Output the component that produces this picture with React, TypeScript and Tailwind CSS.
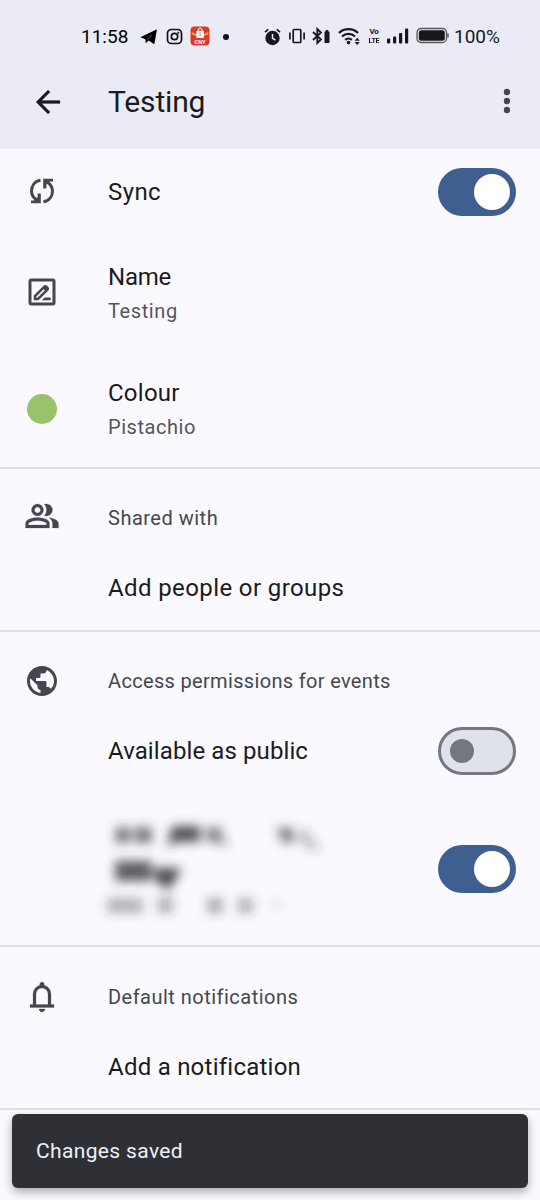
import type { ReactNode } from "react";

const PATHS = {
  back: "m313-440 224 224-57 56-320-320 320-320 57 56-224 224h487v80H313Z",
  group:
    "M40-160v-112q0-34 17.5-62.5T104-378q62-31 126-46.5T360-440q66 0 130 15.5T616-378q29 15 46.5 43.5T680-272v112H40Zm720 0v-120q0-44-24.5-84.5T666-434q51 6 96 20.5t84 35.5q36 20 55 44.5t19 53.5v120H760ZM360-480q-66 0-113-47t-47-113q0-66 47-113t113-47q66 0 113 47t47 113q0 66-47 113t-113 47Zm400-160q0 66-47 113t-113 47q-11 0-28-2.5t-28-5.5q27-32 41.5-71t14.5-81q0-42-14.5-81T544-792q14-5 28-6.5t28-1.5q66 0 113 47t47 113ZM120-240h480v-32q0-11-5.5-20T580-306q-54-27-109-40.5T360-360q-56 0-111 13.5T140-306q-9 5-14.5 14t-5.500 20v32Zm240-320q33 0 56.5-23.5T440-640q0-33-23.5-56.5T360-720q-33 0-56.5 23.5T280-640q0 33 23.5 56.5T360-560Z",
  bell: "M160-200v-80h80v-280q0-83 50-147.5T420-792v-28q0-25 17.5-42.5T480-880q25 0 42.5 17.5T540-820v28q80 20 130 84.5T720-560v280h80v80H160Zm320-300Zm0 420q-33 0-56.5-23.5T400-160h160q0 33-23.5 56.5T480-80ZM320-280h320v-280q0-66-47-113t-113-47q-66 0-113 47t-47 113v280Z",
};

function Icon({ name, className = "" }: { name: keyof typeof PATHS; className?: string }) {
  return (
    <svg viewBox="0 -960 960 960" className={`size-9 shrink-0 fill-current ${className}`}>
      <path d={PATHS[name]} stroke="currentColor" strokeWidth="6" />
    </svg>
  );
}

function SyncIcon() {
  return (
    <svg viewBox="0 0 36 36" className="mb-px size-9" fill="none" stroke="currentColor" strokeWidth="3">
      <path d="M16.500 7.200C10.500 8.200 7.500 13 7.500 18c0 3.800 1.800 6.600 5 8.800" />
      <path d="M7 30.200h9.800v-9.800h-3.200v3.800l-3.600 3.200H7z" fill="currentColor" stroke="none" />
      <path d="M19.500 28.800c6-1 9-5.800 9-10.800 0-3.800-1.800-6.600-5-8.800" />
      <path d="M29 5.800h-9.800v9.800h3.200v-3.800l3.600-3.200h3z" fill="currentColor" stroke="none" />
    </svg>
  );
}

function GlobeIcon() {
  return (
    <svg viewBox="0 0 24 24" className="size-9 fill-current">
      <path d="M12 2C6.48 2 2 6.48 2 12s4.480 10 10 10 10-4.480 10-10S17.520 2 12 2zm-1 17.930c-3.950-.490-7-3.850-7-7.930 0-.620.080-1.210.210-1.790L9 15v1c0 1.100.9 2 2 2v1.930zm6.900-2.540c-.260-.810-1-1.390-1.900-1.390h-1v-3c0-.550-.450-1-1-1H8v-2h2c.550 0 1-.450 1-1V7h2c1.100 0 2-.9 2-2v-.410c2.930 1.190 5 4.060 5 7.410 0 2.080-.8 3.970-2.100 5.390z" />
    </svg>
  );
}

function RenameIcon() {
  return (
    <svg viewBox="0 0 36 36" className="mb-[4px] size-9" fill="none" stroke="currentColor">
      <rect x="6" y="6" width="24" height="24" rx="1.500" strokeWidth="3" />
      <path d="M11 25v-3l9.200-9.200a1.500 1.500 0 0 1 2.100 0l.9.9a1.500 1.500 0 0 1 0 2.100L14 25z" strokeWidth="2.500" />
      <path d="m18.200 13.700 4.200 4.200 2-2v-2.200L22 11.700z" fill="currentColor" stroke="none" />
      <path d="M17.800 26.300l2.900-2.900h6v2.900z" fill="currentColor" stroke="none" />
    </svg>
  );
}

function StatusBar() {
  return (
    <div className="flex h-[73px] items-center pl-[81px] text-[#17181c]">
      <span className="w-[59px] whitespace-nowrap pt-px text-[19px] text-black">11:58</span>
      <svg width="18" height="18" viewBox="0 0 18 18" className="text-black">
        <path d="M0.300 9.200 17 1.300 14.300 16.300 8.600 12.400 5.800 15.200 5.300 11.300z" fill="currentColor" />
        <path d="M6.800 11.800 12 7" fill="none" stroke="#ebebf5" strokeWidth=".4" />
      </svg>
      <svg width="17" height="17" viewBox="0 0 17 17" className="ml-2" fill="none" stroke="#111">
        <rect x="1.500" y="1.500" width="14" height="14" rx="3.800" strokeWidth="1.700" />
        <circle cx="8.500" cy="8.500" r="3.200" strokeWidth="1.700" />
        <circle cx="12.400" cy="4.700" r="1" fill="#111" stroke="none" />
      </svg>
      <svg width="20" height="20" viewBox="0 0 20 20" className="ml-[7px] mb-px">
        <rect x=".5" y=".5" width="19" height="19" rx="4" fill="#dc3a2d" />
        <path d="M1.500 6 6 8v2L2 8.500zM18.500 6 14 8v2l4-1.500z" fill="#f4a340" />
        <rect x="6.300" y="4.700" width="7.600" height="7.300" rx=".8" fill="#fff" />
        <path d="M8.200 5V4a1.900 1.900 0 0 1 3.800 0v1" fill="none" stroke="#fff" />
        <path d="M11.200 7q-2.300-.8-2 .5l1.800 1q.3 1.500-2 .7" fill="none" stroke="#e98277" strokeWidth=".8" />
        <text x="10" y="17.500" textAnchor="middle" fontSize="5.500" fontWeight="700" fill="#fff">
          CNY
        </text>
      </svg>
      <svg width="6" height="6" className="ml-[13px]">
        <circle cx="3" cy="3" r="3" fill="#111" />
      </svg>

      <svg width="17" height="18" viewBox="0 0 17 18" className="ml-[35px]">
        <circle cx="8.500" cy="10" r="7.200" fill="currentColor" />
        <path d="m1 4.200 3.300-2.800M16 4.200l-3.300-2.800" stroke="currentColor" strokeWidth="1.700" />
        <path d="M8.500 6v4.300l3 1.800" fill="none" stroke="#ebebf5" strokeWidth="1.500" />
      </svg>
      <svg width="16" height="16" viewBox="0 0 16 16" className="ml-2 mb-px" fill="none" stroke="currentColor" strokeWidth="1.700">
        <rect x="4.200" y="1.500" width="7.600" height="13" rx="1" />
        <path d="M.9 4.500v7M15.100 4.500v7" />
      </svg>
      <svg width="19" height="18" viewBox="0 0 19 18" className="ml-[7px] mb-px" fill="none" stroke="currentColor" strokeWidth="1.800">
        <path d="m1 5 8 7.500L5.300 16V2L9 5.500 1 13" />
        <path d="M12.500 4.500h1.200V3h2.600v1.500h1.200V16h-5z" fill="currentColor" stroke="none" />
      </svg>
      <svg width="22" height="18" viewBox="0 0 22 18" className="ml-[7px] mb-px" fill="none" stroke="currentColor" strokeWidth="2.300">
        <path d="M1 6a13.800 13.800 0 0 1 19 0M4 9.500a9.500 9.500 0 0 1 13 0M7.200 12.800a5 5 0 0 1 6.600 0" />
        <circle cx="10.500" cy="15.600" r="1.800" fill="currentColor" stroke="none" />
        <path d="m16.600 13.700 2.600-2.900 2.600 2.900zM16.600 15l2.600 2.900 2.600-2.900z" fill="currentColor" stroke="none" />
      </svg>
      <span className="ml-[8px] flex w-[12px] flex-col items-center text-[8px] font-bold leading-[8px] tracking-[-0.3px]">
        <span>Vo</span>
        <span className="mt-px scale-x-90">LTE</span>
      </span>
      <svg width="23" height="18" viewBox="0 0 23 18" className="ml-[7px] mb-px" fill="currentColor">
        <rect x="0" y="11.500" width="3.200" height="5" rx="1" />
        <rect x="6" y="9.500" width="3.200" height="7" rx="1" />
        <rect x="12" y="6" width="3.200" height="10.500" rx="1" />
        <rect x="18" y="1.500" width="3.200" height="15" rx="1" />
      </svg>
      <svg width="34" height="18" viewBox="0 0 34 18" className="ml-[6px] mb-px">
        <rect x="1" y="1.500" width="29.500" height="14" rx="4" fill="none" stroke="#55565c" strokeWidth="1.300" />
        <rect x="2.800" y="3.300" width="26" height="10.400" rx="2.500" fill="currentColor" />
        <path d="M32 6.500v4" stroke="#55565c" strokeWidth="1.500" />
      </svg>
      <span className="ml-[4px] whitespace-nowrap pt-[2px] text-[19px]">100%</span>
    </div>
  );
}

function Switch({ on = false }: { on?: boolean }) {
  return on ? (
    <span role="switch" aria-checked="true" className="flex h-12 w-[78px] shrink-0 items-center justify-end rounded-full bg-[#3f5f90] pr-1.5">
      <span className="size-9 rounded-full bg-white" />
    </span>
  ) : (
    <span role="switch" aria-checked="false" className="flex h-12 w-[78px] shrink-0 items-center rounded-full border-3 border-[#74777f] bg-[#e0e2ea] pl-[9px]">
      <span className="size-6 rounded-full bg-[#74777f]" />
    </span>
  );
}

function Row({ icon, children, end, className }: { icon?: ReactNode; children: ReactNode; end?: ReactNode; className: string }) {
  return (
    <div className={`flex items-center pr-6 pl-6 ${className}`}>
      <span className="flex w-[84px] shrink-0 text-[#44474e]">{icon}</span>
      <div className="flex-1 whitespace-nowrap">{children}</div>
      {end}
    </div>
  );
}

const title = "text-2xl leading-[34px] text-[#1a1b20]";
const subtitle = "text-[20px] leading-[34px] text-[#52555b]";
const heading = "text-[20px] leading-[34px] text-[#44474e]";

function RedactedText() {
  return (
    <svg width="260" height="110" viewBox="94 814 260 110" aria-hidden="true" className="-ml-3.5">
      <defs>
        <filter id="soften" x="-10%" y="-20%" width="120%" height="140%">
          <feGaussianBlur stdDeviation="5.500" />
        </filter>
      </defs>
      <g filter="url(#soften)" fill="#33343a">
        <rect x="115" y="827" width="16" height="16" opacity=".62" />
        <rect x="135" y="827" width="17" height="16" opacity=".66" />
        <path d="M172 826h28v16h-24l-9 5z" opacity=".85" />
        <path d="M206 827h16v11l8 8-10-2-14-3z" opacity=".58" />
        <path d="M276 828h17v15h-9z" opacity=".68" />
        <path d="m298 833 9-4 5 12 8 6-3 5-17-10z" opacity=".34" />
        <rect x="115" y="861" width="37" height="20" opacity=".8" />
        <path d="M155 868h26l-5 11-8 11-13-10z" opacity=".9" />
        <rect x="107" y="898" width="36" height="15" opacity=".36" />
        <rect x="158" y="897" width="15" height="16" opacity=".38" />
        <rect x="207" y="898" width="16" height="15" opacity=".4" />
        <rect x="238" y="898" width="15" height="15" opacity=".38" />
        <rect x="272" y="901" width="10" height="7" opacity=".12" />
      </g>
    </svg>
  );
}

export default function App() {
  return (
    <div className="relative flex h-[1200px] w-[540px] flex-col overflow-hidden bg-[#faf9ff] font-[Roboto,'Liberation_Sans',sans-serif]">
      <header className="h-[149px] shrink-0 bg-[#ebebf5]">
        <StatusBar />
        <div className="flex h-[57px] items-center pr-[29px] pl-[30px]">
          <Icon name="back" className="text-[#1a1b20]" />
          <h1 className="ml-[42px] flex-1 text-[30px] leading-9 tracking-[-0.15px] text-[#1a1b20]">Testing</h1>
          <svg width="8" height="26" viewBox="0 0 8 26" fill="#44474e" className="mb-px">
            <circle cx="4" cy="4" r="3.200" />
            <circle cx="4" cy="13" r="3.200" />
            <circle cx="4" cy="22" r="3.200" />
          </svg>
        </div>
      </header>

      <section className="h-[320px] shrink-0 border-b-2 border-[#dfe0e6]">
        <Row className="h-[85px]" icon={<SyncIcon />} end={<Switch on />}>
          <div className={`${title} tracking-[0.4px]`}>Sync</div>
        </Row>
        <Row className="h-[117px] pt-[2px]" icon={<RenameIcon />}>
          <div className={`${title} tracking-[-0.2px]`}>Name</div>
          <div className={`${subtitle} tracking-[0.6px]`}>Testing</div>
        </Row>
        <Row className="h-[116px] pt-px" icon={<span className="mb-[2px] ml-[3px] size-[30px] rounded-full bg-[#98c26c]" />}>
          <div className={`${title} tracking-[0.25px]`}>Colour</div>
          <div className={`${subtitle} tracking-[0.55px]`}>Pistachio</div>
        </Row>
      </section>

      <section className="h-[163px] shrink-0 border-b-2 border-[#dfe0e6]">
        <Row className="h-[98px]" icon={<Icon name="group" className="mb-[5px]" />}>
          <div className={`${heading} tracking-[0.5px]`}>Shared with</div>
        </Row>
        <Row className="h-[42px]">
          <div className={`${title} tracking-[0.39px]`}>Add people or groups</div>
        </Row>
      </section>

      <section className="h-[315px] shrink-0 border-b-2 border-[#dfe0e6]">
        <Row className="h-[97px] pt-px" icon={<GlobeIcon />}>
          <div className={`${heading} tracking-[0.33px]`}>Access permissions for events</div>
        </Row>
        <Row className="h-[44px]" end={<Switch />}>
          <div className={`${title} tracking-[0.1px]`}>Available as public</div>
        </Row>
        <Row className="mt-[41px] h-[110px]" end={<Switch on />}>
          <RedactedText />
        </Row>
      </section>

      <section className="h-[163px] shrink-0 border-b-2 border-[#dfe0e6]">
        <Row className="h-[99px]" icon={<Icon name="bell" />}>
          <div className={`${heading} tracking-[0.48px]`}>Default notifications</div>
        </Row>
        <Row className="h-[41px]">
          <div className={`${title} tracking-[0.24px]`}>Add a notification</div>
        </Row>
      </section>

      <div role="status" className="absolute inset-x-3 top-[1114px] flex h-[74px] items-center rounded-md bg-[#2f3036] px-6 pt-[2px] text-[21px] tracking-[0.36px] text-[#f0f0f7] shadow-[0_4px_10px_rgba(0,0,0,0.32)]">
        Changes saved
      </div>
    </div>
  );
}
